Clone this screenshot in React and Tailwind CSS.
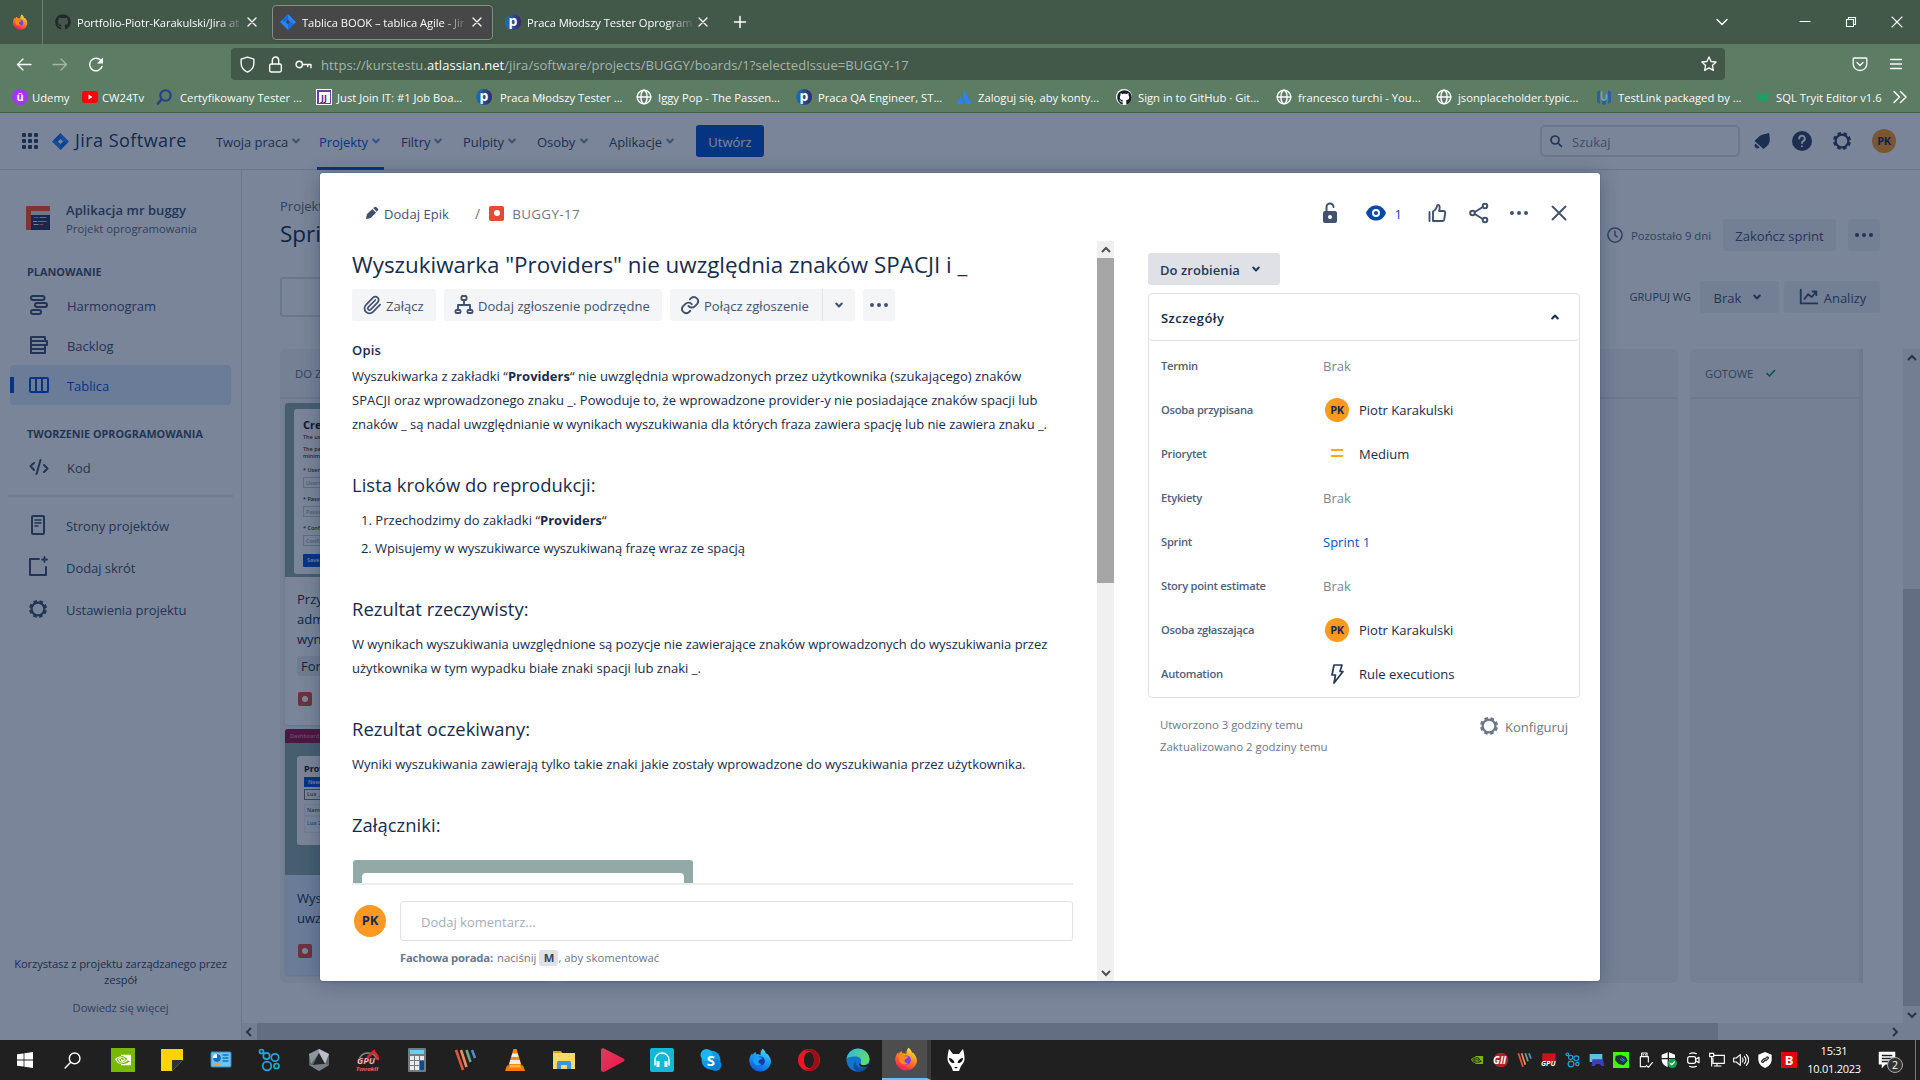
import React from "react";
import { FaGithub } from "react-icons/fa";
import { SiNvidia } from "react-icons/si";
import { Paperclip } from "lucide-react";

/* ---------- icons ---------- */

function Svg({ className = "size-6", children, vb = "0 0 24 24" }) {
  return (
    <svg className={`shrink-0 ${className}`} viewBox={vb} fill="none" stroke="currentColor" strokeWidth="2" strokeLinecap="round" strokeLinejoin="round">
      {children}
    </svg>
  );
}

const Chevron = ({ className = "size-4" }) => (
  <Svg className={className} vb="0 0 16 16"><path d="M5.200 6.500 8 9.500l2.800-3" /></Svg>
);
const ChevronUp = ({ className = "size-4" }) => (
  <Svg className={className} vb="0 0 16 16"><path d="M5.200 9.500 8 6.500l2.800 3" /></Svg>
);
const Dots = ({ className }) => (
  <Svg className={className}><g fill="currentColor" stroke="none"><circle cx="5" cy="12" r="2" /><circle cx="12" cy="12" r="2" /><circle cx="19" cy="12" r="2" /></g></Svg>
);
const Gear = ({ className }) => (
  <Svg className={className}>
    <circle cx="12" cy="12" r="6.4" strokeWidth="2.3" />
    <circle cx="12" cy="12" r="7.7" strokeWidth="2.6" strokeLinecap="butt" strokeDasharray="3.5 2.547" strokeDashoffset="-1.27" />
  </Svg>
);
const Cross = ({ className, w = 1.3 }) => (
  <Svg className={className} vb="0 0 16 16"><path strokeWidth={w} d="m4 4 8 8M12 4l-8 8" /></Svg>
);
const Globe = () => (
  <Svg className="size-4" vb="0 0 16 16"><g strokeWidth="1.4"><circle cx="8" cy="8" r="6.8" /><ellipse cx="8" cy="8" rx="3.1" ry="6.8" /><path d="M1.2 8h13.6" /></g></Svg>
);
const JiraMark = ({ className }) => (
  <Svg className={className} vb="0 0 16 16"><path fill="#2684ff" stroke="none" fillRule="evenodd" d="M8 0 16 8 8 16 0 8ZM8 5.6 5.6 8 8 10.4 10.4 8Z" /><path fill="#0052cc" stroke="none" opacity=".45" d="M8 0v5.6L4 8l-2-2ZM8 16v-5.6L12 8l2 2Z" /></Svg>
);
const Firefox = ({ className, blue }) => {
  const a = blue ? "#4fe3ff" : "#fff04a";
  const b = blue ? "#1b9cf5" : "#ff8a1c";
  const c = blue ? "#0a59d9" : "#f7155f";
  const id = blue ? "fxb" : "fxo";
  return (
    <Svg className={className}>
      <defs><linearGradient id={id} x1=".8" y1="0" x2=".3" y2="1"><stop offset="0" stopColor={a} /><stop offset=".45" stopColor={b} /><stop offset="1" stopColor={c} /></linearGradient></defs>
      <path fill={`url(#${id})`} stroke="none" d="M14.5.8c2 1.300 3 3 3.300 4.700 1.500.3 2.300 1 2.800 2 2 2.500 2.600 5 2.200 7.700A11 11 0 0 1 12 23.500 11 11 0 0 1 1.200 13c0-3 1-5.500 3-7.700l.4 1.800C5.500 5.500 6.500 4.500 7.500 4c0 1 .3 1.700 1 2.300 1.500-.2 3 0 4 .6C12.300 4.500 13 2.500 14.500.8Z" />
      <circle cx="12.300" cy="13" r="4.600" fill={blue ? "#1739a8" : "#7a3ff2"} stroke="none" />
      <path fill={b} stroke="none" d="M5.500 9c2-1.500 4.500-1.500 6 .2 1.600 0 2.500.3 2.800 1-1 1.300-3 1.300-3.800 2.800-.5 1.500.8 3 3 3-2 2.500-7.500 1.500-8.500-3Z" />
    </Svg>
  );
};
const PMark = () => (
  <span className="flex size-4 shrink-0 items-center justify-center rounded-full bg-linear-to-r from-[#1173b8] to-[#2b2a6b] text-[14px] leading-none font-bold text-white"><span className="-mt-0.5">p</span></span>
);
const Bug = ({ className = "size-3.5" }) => (
  <span className={`flex shrink-0 items-center justify-center rounded-xs bg-[#e5493a] ${className}`}><span className="size-1.5 rounded-full bg-white" /></span>
);

/* ---------- browser chrome ---------- */

function Tab({ icon, title, active, className }) {
  return (
    <div className={`flex h-[35px] items-center rounded-[4px] pr-[7px] ${className} ${active ? "border border-[#83917f] bg-[#474747] pl-[7px] shadow" : "pl-2"}`}>
      {icon}
      <span className="ml-1.5 flex-1 overflow-hidden pt-0.5 text-[11.2px] tracking-[-0.060px] whitespace-nowrap text-[#fbfbfe] [mask-image:linear-gradient(to_right,black_84%,transparent)]">{title}</span>
      <Cross className="size-4" />
    </div>
  );
}

function TabStrip() {
  return (
    <div className="flex h-11 items-center bg-[#42594a] text-white">
      <div className="flex h-full w-[43px] items-center justify-center border-r border-[#6b7f70] pr-0.5"><Firefox className="size-4" /></div>
      <Tab className="ml-1 w-[220px]" icon={<FaGithub className="size-4 shrink-0 text-[#24292e]" />} title="Portfolio-Piotr-Karakulski/Jira at" />
      <Tab className="ml-[5px] w-[221px]" active icon={<JiraMark className="size-4" />} title="Tablica BOOK – tablica Agile - Jir" />
      <Tab className="ml-[4px] w-[221px]" icon={<PMark />} title="Praca Młodszy Tester Oprogram" />
      <Svg className="ml-[14px] size-4" vb="0 0 16 16"><path strokeWidth="1.500" d="M8 2.500v11M2.500 8h11" /></Svg>
      <div className="flex-1" />
      <Svg className="mr-[67px] size-4" vb="0 0 16 16"><path strokeWidth="1.4" d="m3 5.500 5 5 5-5" /></Svg>
      <Svg className="mr-[30px] size-4" vb="0 0 16 16"><path strokeWidth="1.2" d="M3 7.500h10" /></Svg>
      <Svg className="mr-[30px] size-4" vb="0 0 16 16"><path strokeWidth="1.1" strokeLinejoin="miter" d="M3.500 5.500h7v7h-7zM5.500 5.500v-2h7v7h-2" /></Svg>
      <Svg className="mr-[15px] size-4" vb="0 0 16 16"><path strokeWidth="1.1" d="m3 3 10 10M13 3 3 13" /></Svg>
    </div>
  );
}

function AddressBar() {
  return (
    <div className="flex h-10 items-center bg-[#5c7c64] text-[#fbfbfe]">
      <Svg className="ml-4 size-4" vb="0 0 16 16"><path strokeWidth="1.4" d="M15 8.500H1.500M7 3 1.500 8.500 7 14" /></Svg>
      <Svg className="ml-5 size-4 opacity-45" vb="0 0 16 16"><path strokeWidth="1.4" d="M1 8.500h13.500M9 3l5.500 5.500L9 14" /></Svg>
      <Svg className="ml-5 size-4" vb="0 0 16 16"><path strokeWidth="1.500" d="M14 10.500a6.300 6.300 0 1 1-1.300-6.200" /><path fill="currentColor" stroke="none" d="M15 1.500v6H9z" /></Svg>
      <div className="ml-[127px] flex h-8 w-[1494px] items-center rounded-[4px] bg-[#42594a]">
        <Svg className="ml-[8px] size-[17px]" vb="0 0 16 16"><path strokeWidth="1.300" d="M8 1 2 3v4c0 4 2.500 6.500 6 8.200C11.500 13.500 14 11 14 7V3Z" /></Svg>
        <Svg className="ml-[11px] size-[17px]" vb="0 0 16 16"><g strokeWidth="1.300"><rect x="2.500" y="7.500" width="11" height="7.500" rx="1.500" /><path d="M5 7.500V4a3 3 0 0 1 6 0v3.500" /></g></Svg>
        <Svg className="ml-[11px] size-[17px]" vb="0 0 16 16"><g strokeWidth="1.300"><circle cx="4" cy="8" r="3" /><path d="M7 8h8v3M12 8v2" /></g></Svg>
        <span className="ml-[9px] pt-[3px] text-[13px] tracking-[0.060px] whitespace-nowrap text-[#a6b5aa]">https://kurstestu.<span className="text-[#fbfbfe]">atlassian.net</span>/jira/software/projects/BUGGY/boards/1?selectedIssue=BUGGY-17</span>
        <div className="flex-1" />
        <Svg className="mr-[8px] size-4" vb="0 0 16 16"><path strokeWidth="1.300" d="m8 .9 2.100 4.600 5 .5-3.700 3.400 1 5L8 11.900l-4.400 2.500 1-5L.9 6l5-.5Z" /></Svg>
      </div>
      <Svg className="ml-[127px] size-4" vb="0 0 16 16"><g strokeWidth="1.300"><path d="M2 2h12a.8.8 0 0 1 .8.8V8A6.800 6.500 0 0 1 1.200 8V2.800A.8.8 0 0 1 2 2ZM5 6.500l3 3 3-3" /></g></Svg>
      <Svg className="ml-5 size-4" vb="0 0 16 16"><path strokeWidth="1.300" d="M2.500 3.500h11M2.500 8h11M2.500 12.500h11" /></Svg>
    </div>
  );
}

function Bookmark({ icon, label, className }) {
  return (
    <div className={`flex shrink-0 items-center ${className}`}>
      {icon}
      <span className="pt-[3px] whitespace-nowrap">{label}</span>
    </div>
  );
}

function Bookmarks() {
  return (
    <div className="flex h-[29px] items-center border-b border-[#42594a] bg-[#5c7c64] pb-[2px] pl-3 text-[11.250px] text-[#fbfbfe]">
      <Bookmark className="w-[70px] gap-1" icon={<span className="flex size-4 items-center justify-center rounded-full bg-[#a435f0] text-[11px] font-bold">û</span>} label="Udemy" />
      <Bookmark className="w-[74px] gap-1" icon={<Svg className="size-4" vb="0 0 16 16"><rect x="0" y="2" width="16" height="12" rx="3" fill="#f00" stroke="none" /><path d="m6.500 5.500 4 2.500-4 2.500Z" fill="#fff" stroke="none" /></Svg>} label="CW24Tv" />
      <Bookmark className="w-40 gap-2" icon={<Svg className="size-4 text-[#283e8e]" vb="0 0 16 16"><circle cx="9.500" cy="6.500" r="5.200" /><path strokeWidth="2.600" d="m5.500 10.500-3.500 4" /></Svg>} label="Certyfikowany Tester ..." />
      <Bookmark className="w-40 gap-[5px]" icon={<span className="flex size-4 items-center justify-center border border-white bg-[#6d3aa8]"><span className="flex size-[11px] items-center justify-center bg-white text-[9px] leading-none font-bold text-[#4c2c86]">JJ</span></span>} label="Just Join IT: #1 Job Boa..." />
      <Bookmark className="w-40 gap-2" icon={<PMark />} label="Praca Młodszy Tester ..." />
      <Bookmark className="w-40 gap-[6px]" icon={<Globe />} label="Iggy Pop - The Passen..." />
      <Bookmark className="w-40 gap-[6px]" icon={<PMark />} label="Praca QA Engineer, ST..." />
      <Bookmark className="w-40 gap-[6px]" icon={<Svg className="size-4" vb="0 0 16 16"><path fill="#2684ff" stroke="none" d="M8 1 15.500 15H10L7 8C6.500 5 7 3 8 1ZM4.500 7.500 8.500 15H.5Z" /></Svg>} label="Zaloguj się, aby konty..." />
      <Bookmark className="w-40 gap-[6px]" icon={<span className="flex size-4 items-center justify-center rounded-full bg-white"><FaGithub className="size-[15px] text-[#1b1f2a]" /></span>} label="Sign in to GitHub · Git..." />
      <Bookmark className="w-40 gap-[6px]" icon={<Globe />} label="francesco turchi - You..." />
      <Bookmark className="w-40 gap-[6px]" icon={<Globe />} label="jsonplaceholder.typic..." />
      <Bookmark className="w-40 gap-[6px]" icon={<Svg className="size-4" vb="0 0 16 16"><path fill="#2b5f9e" stroke="none" d="M4 1v14l-3-2V3ZM12 1l3 2v10l-3 2ZM6 11l2 1 2-1v4l-2 1-2-1Z" /><path stroke="#6aa5cf" strokeWidth="1.600" d="M5.500 3v5.500a2.500 2.500 0 1 0 5 0V6" /></Svg>} label="TestLink packaged by ..." />
      <Bookmark className="w-[136px] gap-1" icon={<Svg className="size-4" vb="0 0 16 16"><path stroke="#04aa6d" strokeWidth="2.200" d="m1.500 5 2.500 7 2.500-7 2.500 7 2.500-7" /><path stroke="#04aa6d" strokeWidth="1.200" d="M13 2.500h1.800L13.500 4.200c2 .3 1.200 2.300-.5 1.800" /></Svg>} label="SQL Tryit Editor v1.6" />
      <Svg className="size-4" vb="0 0 16 16"><path strokeWidth="1.500" d="m2 2.500 5.500 5.500L2 13.500M8.500 2.500 14 8l-5.500 5.500" /></Svg>
    </div>
  );
}

/* ---------- jira page ---------- */

function NavItem({ label, active, className }) {
  return (
    <div className={`relative flex h-full items-center tracking-[-0.060px] ${className} ${active ? "text-[#0052cc]" : "text-[#344563]"}`}>
      <span className="pt-[3px] whitespace-nowrap">{label}</span>
      <Chevron className="ml-auto size-4 opacity-60" />
      {active && <span className="absolute right-0 bottom-[-1px] left-[-2px] h-[3px] bg-[#0052cc]" />}
    </div>
  );
}

function TopNav() {
  return (
    <div className="flex h-[57px] shrink-0 items-center border-b border-[#dfe1e6] bg-white text-[13px] shadow-sm">
      <div className="ml-[22px] grid grid-cols-3 gap-[2px]">
        {Array.from({ length: 9 }, (_, i) => <span key={i} className="size-[4px] rounded-[1px] bg-[#344563]" />)}
      </div>
      <JiraMark className="ml-[14px] size-[17px]" />
      <span className="ml-[6px] w-[141px] pb-0.5 text-[18px] font-medium tracking-[0.450px] whitespace-nowrap text-[#253858]">Jira Software</span>
      <NavItem label="Twoja praca" className="w-[85px]" />
      <NavItem label="Projekty" active className="ml-[18px] w-[65px]" />
      <NavItem label="Filtry" className="ml-[17px] w-[45px]" />
      <NavItem label="Pulpity" className="ml-[17px] w-[57px]" />
      <NavItem label="Osoby" className="ml-[17px] w-[55px]" />
      <NavItem label="Aplikacje" className="ml-[17px] w-[68px]" />
      <div className="ml-[19px] flex h-8 w-17 items-center justify-center rounded-[3px] bg-[#0052cc] pt-[3px] text-white">Utwórz</div>
      <div className="mr-[-1px] ml-auto flex h-8 w-[200px] items-center rounded-[5px] border-2 border-[#dfe1e6] text-[#7a869a]">
        <Svg className="ml-[6px] size-4 text-[#42526e]" vb="0 0 16 16"><circle cx="7" cy="7" r="4" strokeWidth="1.700" /><path strokeWidth="1.700" d="m10 10 3.500 3.500" /></Svg>
        <span className="ml-2 pt-[3px]">Szukaj</span>
      </div>
      <Svg className="ml-[11px] size-6 text-[#344563]"><path fill="currentColor" stroke="none" d="M19 4c.8 3 1 6.500.5 9-.4 2-1.500 3-3 4.500L13.500 20 4.500 12 8 8.500c2-2 3-2.500 5-3C15 5 17 4.500 19 4ZM5.500 14.500l4 4a2.600 2.600 0 0 1-4-4Z" /></Svg>
      <Svg className="ml-4 size-6 text-[#344563]"><circle cx="12" cy="12" r="10" fill="currentColor" stroke="none" /><path stroke="#fff" d="M9.200 9.600a2.800 2.800 0 1 1 4 2.500c-.8.500-1.200 1-1.200 1.900M12 17.200v.1" /></Svg>
      <Gear className="ml-4 size-6 text-[#344563]" />
      <div className="mr-6 ml-[18px] flex size-6 items-center justify-center rounded-full bg-[#ff991f] text-[11px] font-bold tracking-[-0.400px] text-[#172b4d]">PK</div>
    </div>
  );
}

function SideItem({ icon, label, active, className = "h-10" }) {
  return (
    <div className={`relative mx-[10px] flex items-center rounded-[4px] text-[13px] tracking-[-0.040px] ${className} ${active ? "bg-[#deebff] text-[#0052cc]" : "text-[#42526e]"}`}>
      {active && <span className="absolute top-3 bottom-3 left-0 w-1 bg-[#0052cc]" />}
      <span className="ml-[17px] flex w-6 items-center justify-center">{icon}</span>
      <span className="ml-4 pt-1">{label}</span>
    </div>
  );
}

function Sidebar() {
  return (
    <div className="flex w-[242px] shrink-0 flex-col border-r border-[#dfe1e6] bg-white">
      <div className="mt-7 flex pl-[26px]">
        <Svg className="mt-2 size-6"><rect width="24" height="24" rx="1" fill="#ff5630" stroke="none" /><rect x="5" y="5" width="19" height="4" fill="#dfe1e6" stroke="none" /><rect x="5" y="9" width="19" height="15" fill="#253858" stroke="none" /><g strokeWidth="1"><path stroke="#ff7452" d="M8 11.500h4M14 18.500h3" /><path stroke="#79e2f2" d="M14 11.500h6M12 15.500h8" /><path stroke="#fff" d="M7.500 15.500h3M8 18.500h4" /></g></Svg>
        <div className="ml-4 flex flex-col">
          <span className="flex h-6 items-center pt-0.5 text-[13px] font-semibold tracking-[0.050px] text-[#42526e]">Aplikacja mr buggy</span>
          <span className="flex h-3.5 items-center text-[11.300px] text-[#5e6c84]">Projekt oprogramowania</span>
        </div>
      </div>
      <div className="mt-7 flex h-4 items-center pl-[27px] text-[10.900px] font-bold text-[#42526e]">PLANOWANIE</div>
      <div className="mt-[5px]">
        <SideItem label="Harmonogram" icon={<Svg><rect x="4" y="3" width="13.500" height="4" rx="2" /><rect x="8" y="10" width="12" height="4" rx="2" /><rect x="4" y="17" width="10" height="4" rx="2" /></Svg>} />
        <SideItem label="Backlog" icon={<Svg><path d="M4 4h14v4H4zM4 8h16v4H4zM4 12h14v8H4zM4 16h14" /></Svg>} />
        <SideItem active label="Tablica" icon={<Svg><rect x="3" y="5" width="18" height="14" rx="1" /><path d="M9 5v14M15 5v14" /></Svg>} />
      </div>
      <div className="mt-[21px] flex h-4 items-center pl-[27px] text-[10.800px] font-bold whitespace-nowrap text-[#42526e]">TWORZENIE OPROGRAMOWANIA</div>
      <div className="mt-[5px]">
        <SideItem label="Kod" icon={<Svg><path d="m7 8-3.500 3L7 15M17 10l3.500 3.500L17 17M13.500 5l-4 14" /></Svg>} />
      </div>
      <div className="mx-2 mt-2 h-[2px] bg-[#ebecf0]" />
      <div className="mt-[7px] -ml-px">
        <SideItem className="h-[42px]" label="Strony projektów" icon={<Svg><rect x="6" y="3" width="12" height="18" rx="1" /><path strokeWidth="1.600" d="M9 7h6M9 10h6M9 13h3" /></Svg>} />
        <SideItem className="h-[42px]" label="Dodaj skrót" icon={<Svg><path d="M13 4H4v16h16v-8" /><path strokeWidth="1.800" d="M18.500 2v5M16 4.500h5" /></Svg>} />
        <SideItem className="h-[42px]" label="Ustawienia projektu" icon={<Gear />} />
      </div>
      <div className="mt-auto pb-6 text-center text-[11.200px] leading-4 tracking-[-0.080px]">
        <p className="px-3 text-[#344563]">Korzystasz z projektu zarządzanego przez zespół</p>
        <p className="mt-3 text-[#5e6c84]">Dowiedz się więcej</p>
      </div>
    </div>
  );
}

function GreyButton({ children, className }) {
  return <div className={`flex h-8 items-center justify-center rounded-[3px] bg-[#f0f1f4] text-[13px] text-[#42526e] ${className}`}>{children}</div>;
}

function FormThumb() {
  return (
    <div className="h-[174px] bg-[#91aaa7] pt-[6px] pl-[9px] text-[5.500px] font-semibold text-[#333]">
      <div className="h-[165px] rounded-[3px] bg-white pt-[8px] pl-[9px]">
        <p className="text-[11px] leading-4 font-bold text-[#111]">Create</p>
        <p className="mt-[1px] leading-[7px]">The username</p>
        <p className="mt-[5px] leading-[7px]">The password<br />minimum</p>
        {["Username", "Password", "Confirm"].map((t) => (
          <div key={t} className="mt-[5px] h-[24px]">
            <p className="pt-[1px] leading-[9px]">* {t}</p>
            <p className="mt-[2px] h-[11px] border border-[#ccc] pl-0.5 leading-[10px] text-[#aaa]">{t}</p>
          </div>
        ))}
        <p className="mt-[7px] h-[13px] rounded-[1px] bg-[#0052cc] pl-1 leading-[12px] text-white">Save</p>
      </div>
    </div>
  );
}

function ProviderThumb() {
  return (
    <div className="h-[146px] bg-[#91aaa7] text-[5.500px] font-semibold text-[#555]">
      <div className="flex h-[14px] items-center gap-1 overflow-hidden bg-[#9c1040] pl-[5px] text-[#d08aa0]"><span>Dashboard</span><span>Clients</span></div>
      <div className="mt-[13px] ml-3 h-[89px] rounded-[3px] bg-white pt-[6px] pl-[7px]">
        <p className="text-[9px] leading-[13px] font-bold text-[#111]">Providers</p>
        <p className="mt-[2px] h-[10px] bg-[#0052cc] pl-1 leading-[10px] text-white">New</p>
        <p className="mt-[2px] h-[11px] border border-[#777] pl-0.5 leading-[9px]">Lux _</p>
        <p className="mt-1 h-[12px] border border-[#eee] pl-0.5 leading-[11px]">Name</p>
        <p className="h-[17px] border border-[#eee] pl-0.5 leading-[13px] text-[#2a7de1]">Lux 2</p>
      </div>
    </div>
  );
}

function ScrollArrow({ className, d }) {
  return <div className={`flex shrink-0 items-center justify-center ${className}`}><Svg className="size-3" vb="0 0 12 12"><path d={d} strokeLinecap="butt" strokeLinejoin="miter" /></Svg></div>;
}

function Board() {
  return (
    <div className="flex min-w-0 flex-1 flex-col bg-white">
      <div className="flex min-h-0 flex-1">
        <div className="flex min-w-0 flex-1 flex-col pl-[38px]">
          <div className="flex h-[100px] items-start justify-between pr-[23px]">
            <div className="pt-[26px]">
              <p className="text-[13px] leading-5 text-[#5e6c84]">Projekty</p>
              <p className="text-[22.500px] leading-9 text-[#172b4d]">Sprint 1</p>
            </div>
            <div className="flex items-center pt-[49px]">
              <Svg className="size-[18px] text-[#5e6c84]"><circle cx="12" cy="12" r="9.500" /><path d="M12 7v5.500l3 2" /></Svg>
              <span className="mr-[12px] ml-[7px] pt-0.5 text-[11.300px] text-[#5e6c84]">Pozostało 9 dni</span>
              <GreyButton className="w-[113px]"><span className="pt-1">Zakończ sprint</span></GreyButton>
              <GreyButton className="ml-3 w-8"><Dots className="size-6" /></GreyButton>
            </div>
          </div>
          <div className="flex h-[79px] items-start justify-between pr-[23px]">
            <div className="mt-[7px] h-10 w-40 rounded-[3px] border-2 border-[#dfe1e6]" />
            <div className="flex items-center pt-[11px]">
              <span className="mr-[9px] text-[11px] text-[#42526e]">GRUPUJ WG</span>
              <GreyButton className="w-[79px]"><span className="mr-2 pt-[3px]">Brak</span><Chevron /></GreyButton>
              <GreyButton className="ml-[5px] w-[96px]"><Svg className="mr-1 size-[22px]"><path d="M3 4v15h18" /><path d="m7 14 4-5 4 3 5-6M16 6h4v4" /></Svg><span className="pt-[3px]">Analizy</span></GreyButton>
            </div>
          </div>
          <div className="flex gap-3">
            <div className="h-[634px] w-[270px] rounded-[6px] bg-[#f4f5f7]">
              <div className="flex h-[50px] items-center border-b-2 border-[#e3e5ea] pl-[15px] pt-0.5 text-[11.300px] text-[#5e6c84]">DO ZROBIENIA</div>
              <div className="mx-[5px] mt-1 h-[322px] overflow-hidden rounded-[3px] bg-white shadow">
                <FormThumb />
                <div className="pt-3 pl-3 text-[13px] leading-5 text-[#172b4d]">
                  <p>Przycisk<br />administrator<br />wyników</p>
                  <p className="mt-[7px] h-5 w-24 rounded-[3px] bg-[#ebecf0] pl-1">Formularz</p>
                  <Bug className="mt-4 ml-px size-3.5" />
                </div>
              </div>
              <div className="mx-[5px] mt-1 h-[246px] overflow-hidden rounded-[3px] bg-[#deebff] shadow">
                <ProviderThumb />
                <div className="pt-[13px] pl-3 text-[13px] leading-5 text-[#172b4d]">
                  <p>Wyszukiwarka<br />uwzględnia</p>
                  <Bug className="mt-4 ml-px size-3.5" />
                </div>
              </div>
            </div>
            <div className="h-[634px] flex-1 rounded-[6px] bg-[#f4f5f7]"><div className="h-[50px] border-b-2 border-[#e3e5ea]" /></div>
            <div className="mr-10 h-[634px] w-[173px] rounded-l-[6px] bg-[#f4f5f7] bg-linear-to-l from-[#dfe2e8] via-[#f4f5f7] via-4% to-[#f4f5f7]">
              <div className="flex h-[50px] items-center border-b-2 border-[#e3e5ea] pl-[15px] text-[11.300px] text-[#5e6c84]"><span className="pt-0.5 tracking-[-0.080px]">GOTOWE</span><Svg className="ml-[10px] size-4 text-[#00875a]" vb="0 0 16 16"><path strokeWidth="1.500" d="m4 8.500 2.500 2.500 5-5.500" /></Svg></div>
            </div>
          </div>
        </div>
        <div className="mt-[179px] flex w-[17px] shrink-0 flex-col bg-[#f0f0f2] text-[#505050]">
          <ScrollArrow className="h-[17px]" d="M2 8l4-4 4 4" />
          <div className="mt-[223px] flex-1 bg-[#cdcdcd]" />
          <ScrollArrow className="h-[17px]" d="M2 4l4 4 4-4" />
        </div>
      </div>
      <div className="flex h-[17px] shrink-0 bg-[#f0f0f2] pr-[17px] text-[#505050]">
        <ScrollArrow className="w-[13px]" d="M8 2 4 6l4 4" />
        <div className="ml-[2px] w-[1461px] bg-[#cdcdcd]" />
        <div className="flex-1" />
        <ScrollArrow className="w-[17px]" d="m4 2 4 4-4 4" />
      </div>
    </div>
  );
}

/* ---------- issue dialog ---------- */

function Avatar({ className }) {
  return <span className={`flex shrink-0 items-center justify-center rounded-full bg-[#ff991f] font-bold text-[#172b4d] ${className}`}>PK</span>;
}

function DialogHeader() {
  return (
    <div className="flex h-[68px] items-center pt-3 text-[13px] text-[#42526e]">
      <Svg className="ml-[44px] size-4" vb="0 0 16 16"><path fill="currentColor" stroke="none" d="M10 2.500c1-1 1.600-1 2.500-.2l1.200 1.200c.8.900.8 1.500 0 2.300l-.9.900-3.700-3.700ZM8.300 3.900l3.800 3.800-5.400 5.400-3.900.8c-.5.100-.8-.2-.7-.7l.8-3.900Z" /></Svg>
      <span className="ml-[4px] pt-[3px] tracking-[0.060px]">Dodaj Epik</span>
      <span className="ml-[26px] text-[14px] text-[#6b778c]">/</span>
      <Bug className="ml-[9px] size-[15px]" />
      <span className="ml-2 pt-[3px] text-[13.400px] tracking-[0.350px] text-[#6b778c]">BUGGY-17</span>
      <div className="flex-1" />
      <Svg className="size-6"><rect x="5" y="10" width="14" height="12" rx="2" fill="currentColor" stroke="none" /><path d="M8.500 11V6a3.500 3.500 0 0 1 7 0" /><circle cx="12" cy="16" r="2" fill="#fff" stroke="none" /></Svg>
      <Svg className="ml-[22px] size-6 text-[#0747a6]"><path fill="currentColor" stroke="none" d="M12 4.500c4.500 0 8 2.500 10 7.500-2 5-5.500 7.500-10 7.500S4 17 2 12C4 7 7.500 4.500 12 4.500Z" /><circle cx="12" cy="12" r="3" stroke="#fff" strokeWidth="2" /></Svg>
      <span className="ml-[7px] pt-[3px] text-[#0747a6]">1</span>
      <Svg className="ml-[23px] size-6"><path strokeWidth="1.900" d="M8 10.500V20h9.500c1 0 1.500-.5 1.700-1.500l1-6.500c.2-1.200-.5-2-1.700-2H14c1-2.500 1-6-.8-6-1 0-1.200.6-1.400 1.700C11.300 8 9.800 9.500 8 10.500ZM4.500 11v9" /></Svg>
      <Svg className="ml-[18px] size-6"><circle cx="18" cy="5" r="2.300" /><circle cx="18" cy="19" r="2.300" /><circle cx="5.500" cy="12" r="2.300" /><path d="m7.800 11 8-5M7.800 13l8 5" /></Svg>
      <Dots className="ml-4 size-6" />
      <Svg className="mr-[29px] ml-4 size-6"><path strokeWidth="1.900" d="m5.500 5.500 13 13M18.500 5.500l-13 13" /></Svg>
    </div>
  );
}

function ToolButton({ children, className }) {
  return <div className={`flex h-8 items-center bg-[#f4f5f7] whitespace-nowrap ${className}`}>{children}</div>;
}

function Heading({ children }) {
  return <h2 className="mt-[35px] h-7 text-[18.400px] leading-7 tracking-[0.040px] text-[#172b4d]">{children}</h2>;
}

function IssueBody() {
  return (
    <div className="flex w-[777px] shrink-0 flex-col pr-6 pl-8 text-[13px] text-[#172b4d]">
      <h1 className="h-12 text-[22.400px] leading-[48px] whitespace-nowrap">Wyszukiwarka "Providers" nie uwzględnia znaków SPACJI i _</h1>
      <div className="flex text-[#42526e]">
        <ToolButton className="w-[84px] rounded-[3px] pl-[10px]">
          <Paperclip className="mr-[4px] size-5" strokeWidth={2.100} />
          <span className="pt-[3px]">Załącz</span>
        </ToolButton>
        <ToolButton className="ml-2 w-[218px] rounded-[3px] pl-[8px]">
          <Svg className="mr-[2px] size-6"><g strokeWidth="1.900"><rect x="9.500" y="3" width="5" height="4" rx="1" /><rect x="3.500" y="17" width="5" height="3" rx="1" /><rect x="15.500" y="17" width="5" height="3" rx="1" /><path d="M12 7v5M6 17v-5h12v5" /></g></Svg>
          <span className="pt-[3px] tracking-[0.050px]">Dodaj zgłoszenie podrzędne</span>
        </ToolButton>
        <ToolButton className="ml-2 w-[152px] rounded-l-[3px] pl-[8px]">
          <Svg className="mr-[2px] size-6"><g transform="translate(2 2) scale(.84)"><path strokeWidth="2.300" d="M10 13a5 5 0 0 0 7.500.5l3-3a5 5 0 0 0-7-7l-1.700 1.700M14 11a5 5 0 0 0-7.500-.5l-3 3a5 5 0 0 0 7 7l1.700-1.700" /></g></Svg>
          <span className="pt-[3px] tracking-[0.040px]">Połącz zgłoszenie</span>
        </ToolButton>
        <ToolButton className="w-[33px] justify-center rounded-r-[3px] border-l border-[#dfe1e6]"><Chevron /></ToolButton>
        <ToolButton className="ml-2 w-8 justify-center rounded-[3px]"><Dots className="size-6" /></ToolButton>
      </div>
      <p className="mt-5 h-[18px] leading-[18px] font-semibold tracking-[0.200px]">Opis</p>
      <div className="mt-[5px] leading-6 whitespace-nowrap">
        <p className="tracking-[0.035px]">Wyszukiwarka z zakładki “<b>Providers</b>“ nie uwzględnia wprowadzonych przez użytkownika (szukającego) znaków</p>
        <p className="tracking-[0.010px]">SPACJI oraz wprowadzonego znaku _. Powoduje to, że wprowadzone provider-y nie posiadające znaków spacji lub</p>
        <p className="tracking-[-0.045px]">znaków _ są nadal uwzględnianie w wynikach wyszukiwania dla których fraza zawiera spację lub nie zawiera znaku _.</p>
      </div>
      <Heading>Lista kroków do reprodukcji:</Heading>
      <ol className="mt-[9px] flex flex-col gap-1 pl-[9px] leading-6">
        <li className="tracking-[0.040px]">1. Przechodzimy do zakładki “<b>Providers</b>“</li>
        <li className="tracking-[-0.060px]">2. Wpisujemy w wyszukiwarce wyszukiwaną frazę wraz ze spacją</li>
      </ol>
      <Heading>Rezultat rzeczywisty:</Heading>
      <div className="mt-[9px] leading-6 whitespace-nowrap">
        <p className="tracking-[-0.040px]">W wynikach wyszukiwania uwzględnione są pozycje nie zawierające znaków wprowadzonych do wyszukiwania przez</p>
        <p className="tracking-[0.020px]">użytkownika w tym wypadku białe znaki spacji lub znaki _.</p>
      </div>
      <Heading>Rezultat oczekiwany:</Heading>
      <p className="mt-[9px] leading-6 tracking-[-0.015px] whitespace-nowrap">Wyniki wyszukiwania zawierają tylko takie znaki jakie zostały wprowadzone do wyszukiwania przez użytkownika.</p>
      <Heading>Załączniki:</Heading>
      <div className="mt-[21px] ml-px h-[23px] w-[340px] rounded-t-[3px] bg-[#91aaa7] px-[9px] pt-[13px]"><div className="h-full rounded-t-[4px] bg-white" /></div>
      <div className="h-[2px] bg-[#ebecf0]" />
      <div className="mt-4 flex items-center pl-[2px]">
        <Avatar className="size-8 text-[13px] tracking-[-0.200px]" />
        <div className="ml-[14px] flex h-10 flex-1 items-center rounded-[3px] border border-[#dfe1e6] pt-[3px] pl-5 text-[#a5adba]">Dodaj komentarz...</div>
      </div>
      <p className="mt-2 flex h-[18px] items-center pl-12 text-[11.300px] text-[#6b778c]">
        <b className="tracking-[-0.200px]">Fachowa porada:</b><span className="ml-[4px]">naciśnij</span>
        <b className="ml-[3px] flex h-4 w-[19px] items-center justify-center rounded-[3px] bg-[#dfe1e6] text-[#344563]">M</b><span>, aby skomentować</span>
      </p>
    </div>
  );
}

function Field({ label, icon, children, muted, link }) {
  return (
    <div className="flex h-11 items-center pl-3">
      <span className="w-[162px] text-[11.200px] font-semibold tracking-[-0.260px] text-[#505f79]">{label}</span>
      {icon && <span className="mr-[10px] ml-[2px] flex w-6 justify-center">{icon}</span>}
      <span className={`pt-0.5 ${muted ? "text-[#7a869a]" : link ? "text-[#0052cc]" : "text-[#172b4d]"}`}>{children}</span>
    </div>
  );
}

function IssueDetails() {
  return (
    <div className="flex-1 pt-3 pr-5 pl-[34px] text-[13px]">
      <div className="flex h-8 w-[132px] items-center rounded-[3px] bg-[#dfe1e6] pl-3 font-semibold text-[#253858]"><span className="pt-[3px] tracking-[0.060px]">Do zrobienia</span><Chevron className="ml-2 size-4" /></div>
      <div className="mt-2 rounded-[4px] border border-[#dfe1e6]">
        <div className="flex h-[47px] items-center justify-between rounded-b-[4px] border-b border-[#dfe1e6] pr-4 pl-3 font-semibold text-[#172b4d]"><span className="pt-[3px] tracking-[0.450px]">Szczegóły</span><ChevronUp /></div>
        <div className="pt-[3px] pb-px">
          <Field label="Termin" muted>Brak</Field>
          <Field label="Osoba przypisana" icon={<Avatar className="size-6 text-[11px] tracking-[-0.400px]" />}>Piotr Karakulski</Field>
          <Field label="Priorytet" icon={<span className="-mt-0.5 flex flex-col gap-[4px]"><i className="h-[2px] w-3 bg-[#ffab00]" /><i className="h-[2px] w-3 bg-[#ffab00]" /></span>}>Medium</Field>
          <Field label="Etykiety" muted>Brak</Field>
          <Field label="Sprint" link>Sprint 1</Field>
          <Field label="Story point estimate" muted>Brak</Field>
          <Field label="Osoba zgłaszająca" icon={<Avatar className="size-6 text-[11px] tracking-[-0.400px]" />}>Piotr Karakulski</Field>
          <Field label="Automation" icon={<Svg className="size-6 text-[#253858]"><path strokeWidth="1.700" d="M9 3h8l-2 6.500h3L9 21l1.500-8H7Z" /></Svg>}>Rule executions</Field>
        </div>
      </div>
      <div className="mt-[16px] flex items-start justify-between pr-3 pl-3 text-[#6b778c]">
        <p className="text-[11.400px] leading-[22px]">Utworzono 3 godziny temu<br />Zaktualizowano 2 godziny temu</p>
        <div className="flex items-center"><Gear className="mr-1 size-6" /><span className="pt-[3px]">Konfiguruj</span></div>
      </div>
    </div>
  );
}

function IssueDialog() {
  return (
    <div className="flex h-[808px] w-[1280px] flex-col overflow-hidden rounded-[3px] bg-white shadow-[0_0_0_1px_rgba(9,30,66,0.08),0_2px_20px_rgba(9,30,66,0.3)]">
      <DialogHeader />
      <div className="flex flex-1">
        <IssueBody />
        <div className="flex w-[17px] shrink-0 flex-col bg-[#f0f0f0] text-[#505050]">
          <ScrollArrow className="h-[17px]" d="M2 8l4-4 4 4" />
          <div className="h-[325px] bg-[#a6a6a6]" />
          <div className="flex-1" />
          <ScrollArrow className="h-[17px]" d="M2 4l4 4 4-4" />
        </div>
        <IssueDetails />
      </div>
    </div>
  );
}

/* ---------- taskbar ---------- */

const Stripes = ({ className }) => (
  <Svg className={className}><g strokeWidth="2.600" strokeLinecap="butt"><path stroke="#e2573b" d="M2 2l7 20" /><path stroke="#ef8a5b" d="M7 2l5.500 17" /><path stroke="#6aa58e" d="M12.500 2l4 12" /><path stroke="#4d8fd0" d="M18 2l3 8" /></g></Svg>
);
const Molecules = ({ className }) => (
  <Svg className={className}><g stroke="#25a5dc" strokeWidth="1.700"><circle cx="3.500" cy="3.500" r="2" /><circle cx="8.500" cy="8" r="3.200" /><circle cx="17" cy="9.500" r="3.700" /><circle cx="9" cy="18" r="4.300" /><circle cx="18.500" cy="18" r="2.500" /></g></Svg>
);
const GpuTweak = ({ className }) => (
  <Svg className={className}><path stroke="#8a8a8a" strokeWidth="1.300" d="M3 12a9.500 9.500 0 0 1 18-1" /><path stroke="#e0242c" strokeWidth="2.500" d="M12 9l6-6M19 5a9 9 0 0 1 3 6" /><text x="1" y="16" fontSize="9" fontWeight="700" fontStyle="italic" fill="#fff" stroke="#a00" strokeWidth=".4">GPU</text><text x="0" y="22.500" fontSize="6" fontWeight="700" fontStyle="italic" fill="#e8b9b9" stroke="#900" strokeWidth=".3">TweakII</text></Svg>
);

const apps = [
  <Svg className="size-4" vb="0 0 16 16"><path fill="#fff" stroke="none" d="M0 2.300 6.600 1.400V7.600H0ZM7.400 1.300 16 0v7.600H7.400ZM0 8.400h6.600v6.200L0 13.700ZM7.400 8.400H16V16l-8.600-1.200Z" /></Svg>,
  <Svg className="mr-0.5 size-[17px] text-white"><circle cx="15" cy="9" r="7.500" /><path d="M9.500 14.500 1.500 22.500" /></Svg>,
  <span className="flex size-6 items-center justify-center bg-[#76b900]"><SiNvidia className="size-4 text-white" /></span>,
  <Svg className="size-6"><path fill="#fcd500" stroke="none" d="M1 1h22v11L12 23H1Z" /><path fill="#2d3138" stroke="none" d="M12 12h11L12 23Z" /></Svg>,
  <Svg className="size-6"><rect x="2" y="4" width="20" height="15" rx="1" fill="#6cc4f2" stroke="#3187c4" strokeWidth="1" /><circle cx="8" cy="10" r="4" fill="#fff" stroke="none" /><path fill="#1b6fc2" stroke="none" d="M8 6a4 4 0 1 1-4 4h4Z" /><path stroke="#1b6fc2" strokeWidth="1.300" d="M14 7h5M14 10h5M14 13h5" /><path stroke="#f0a030" strokeWidth="1.300" d="M5 16.500h6" /></Svg>,
  <Molecules className="size-6" />,
  <Svg className="size-6"><path fill="#5d646c" stroke="none" d="m12 1 10 5v11l-10 6-10-6V6Z" /><path fill="#b9bfc5" stroke="none" d="m12 1 10 5-4 10-6-11Z" /><path fill="#8f969d" stroke="none" d="M12 1 2 6l2 10 8-11Z" /><path fill="#24282c" stroke="none" d="m12 5 6 11-12 1Z" /><path fill="#777e85" stroke="none" d="m2 17 4 0 12-1 4 1-10 6Z" /></Svg>,
  <GpuTweak className="size-6" />,
  <Svg className="size-6"><rect x="3" y="0" width="18" height="24" rx="1" fill="#737a80" stroke="none" /><rect x="5" y="2" width="14" height="4" fill="#5fd3f3" stroke="none" /><g fill="#e8eaec" stroke="none"><path d="M5 8h4v4H5zM10 8h4v4h-4zM15 8h4v4h-4zM5 13h4v4H5zM10 13h4v4h-4zM5 18h4v4H5zM10 18h4v4h-4z" /></g><path fill="#0f4a8a" stroke="none" d="M15 13h4v9h-4z" /></Svg>,
  <Stripes className="size-6" />,
  <Svg className="size-6"><path fill="#ff8a00" stroke="none" d="M10.500 1h3L19 19H5Z" /><path fill="#e9edf0" stroke="none" d="m9.300 5.500-1 3.500h7.400l-1-3.500ZM7.300 12l-1 4h11.400l-1-4Z" /><path fill="#f57c00" stroke="none" d="M4 17.500h16l2 5.500H2Z" /><path fill="#ffb24d" stroke="none" d="M7 17h10l1 2.500H6Z" /></Svg>,
  <Svg className="size-6"><path fill="#e2a100" stroke="none" d="M1 3h8l2 3H1Z" /><path fill="#ffd869" stroke="none" d="M1 5h22v16H1Z" /><path fill="#3c94dc" stroke="none" d="M5 21v-6.500A1.500 1.500 0 0 1 6.500 13h11a1.500 1.500 0 0 1 1.500 1.500V21h-4v-4H9v4Z" /></Svg>,
  <Svg className="size-6"><defs><linearGradient id="play" x1="0" y1="0" x2="1" y2="1"><stop stopColor="#d8405c" /><stop offset="1" stopColor="#f5124c" /></linearGradient></defs><path fill="url(#play)" stroke="none" d="M0 2C0 0 2 0 3 .5l19.500 10c1.500 1 1.500 2 0 3L4 23.500c-2 1-4 .5-4-1.500Z" /></Svg>,
  <Svg className="size-6"><rect width="24" height="24" rx="2" fill="#13b8d6" stroke="none" /><path stroke="#fff" strokeWidth="1.500" d="M5 17v-5a7 7 0 0 1 14 0v5" /><path stroke="#fff" strokeWidth="3" strokeLinecap="butt" d="M8 13v6M16 13v6" /></Svg>,
  <Svg className="size-6"><circle cx="12" cy="12" r="9.500" fill="#0f9be6" stroke="none" /><circle cx="7.500" cy="7" r="6" fill="#1fb4f2" stroke="none" /><circle cx="16.500" cy="17" r="6" fill="#0a7fd6" stroke="none" /><text x="12" y="17.500" textAnchor="middle" fontSize="15" fontWeight="700" fill="#fff" stroke="none">S</text></Svg>,
  <Firefox blue className="size-6" />,
  <Svg className="size-6"><path fill="#f01525" stroke="none" fillRule="evenodd" d="M12 1a11 11 0 1 0 0 22 11 11 0 0 0 0-22Zm0 3c2.800 0 5 3.500 5 8s-2.200 8-5 8-5-3.500-5-8 2.200-8 5-8Z" /><path fill="#9e0c17" stroke="none" d="M13 1.100a11 11 0 0 1 0 21.800c-2 0-4-.9-5.500-2.400 5 2.500 9.500-2 9.500-8.500S12.500 1 7.500 3.500C9 2 11 1 13 1.100Z" /></Svg>,
  <Svg className="size-6"><defs><linearGradient id="edge" x1="0" y1="0" x2="1" y2=".4"><stop stopColor="#2cb4e8" /><stop offset="1" stopColor="#5fdc6f" /></linearGradient></defs><circle cx="12" cy="12" r="11.500" fill="#1274cd" stroke="none" /><path fill="#0d4f9e" stroke="none" d="M9.500 13c-.5 5 4 8.500 12 6-2 2.800-5.500 4.500-9.500 4.500-4.500-1-6.500-6-2.500-10.500Z" /><path fill="url(#edge)" stroke="none" d="M.6 11A11.500 11.500 0 0 1 23.500 11c0 4-3 6-6 6-2 0-3.500-.6-3-1.600C16 13 15 8.500 10.500 8.500 6 8.500 2 9 .6 11Z" /><path fill="#202021" stroke="none" d="M14.500 15.400c-.3 1.500 4.500 3.100 9 .2l-1.500 3c-5 1.500-8.500 0-9-2.100-.2-1 .8-1.700 1.500-1.100Z" /></Svg>,
  <Firefox className="size-6" />,
  <Svg className="size-6"><path fill="#fff" stroke="none" d="M5 1c1.500 1.500 3 4 4 5h6c1-1 2.500-3.500 4-5 1 3 1.500 7 1.500 9.500 0 4-2.500 6-4 8.500L15 23H9l-1.500-4C6 16.500 3.500 14.500 3.500 10.500 3.500 8 4 4 5 1Z" /><path fill="#111" stroke="none" d="M5 10c2.500 0 5 2 5.500 5C8 15.500 5 13.500 5 10ZM19 10c-2.500 0-5 2-5.500 5 2.500.5 5.500-1.500 5.500-5ZM10 19h4l-2 1.500Z" /></Svg>,
];

const tray = [
  <SiNvidia className="size-3 text-[#76b900]" />,
  <Svg className="size-4"><circle cx="12" cy="12" r="11" fill="#b3222a" stroke="none" /><text x="0" y="18" fontSize="15" fontWeight="700" fontStyle="italic" fill="#fff" stroke="none">GII</text></Svg>,
  <Stripes className="size-4" />,
  <Svg className="size-4"><rect x="2" y="2" width="20" height="13" fill="#c4161c" stroke="none" /><text x="0" y="21" fontSize="11" fontWeight="700" fontStyle="italic" fill="#fff" stroke="none">GPU</text></Svg>,
  <Molecules className="size-4" />,
  <Svg className="size-4"><rect x="1" y="3" width="19" height="12" fill="#5ec3d8" stroke="none" /><path fill="#3d3dbf" stroke="none" d="M5 11h16l2 10h-4l-3-3h-5l-3 3H4Z" /></Svg>,
  <Svg className="size-4"><rect width="24" height="24" fill="#3dff00" stroke="none" /><path fill="#26323a" stroke="none" d="m4 6 7-2 8 3 3 6-6 7-8-2-5-6Z" /><path stroke="#2c9be0" strokeWidth="1.300" d="M11 11l5 3M13 9l5 4" /></Svg>,
  <Svg className="size-4"><path strokeWidth="1.700" d="M7 7V1.500h8V7M5 7h12v8M5 7v15h8M14 20l3 3 6-7M9.500 4v.5M12.500 4v.5" /></Svg>,
  <Svg className="size-4"><path fill="#fff" stroke="none" d="M11 0 1 4v7c0 6 4 10 10 12 6-2 10-6 10-12V4Z" /><path stroke="#202021" d="M11 0v23M1 10h20" /><circle cx="17" cy="17" r="7" fill="#12a150" stroke="none" /><path stroke="#fff" d="m14 17 2 2 4-4" /></Svg>,
  <Svg className="size-4"><g strokeWidth="1.800"><rect x="4" y="7" width="12" height="10" rx="3" /><path d="m16 11 5-3v8l-5-3M7 2.500c3-1.500 7-1.500 10 0M7 21.500c3 1.500 7 1.500 10 0" /></g></Svg>,
  <Svg className="size-4"><g strokeWidth="1.700" strokeLinejoin="miter"><path d="M8 5h15v12H6v-7M1 2h6v5H1zM4 7v14M12 17v4M8 21h10" /></g></Svg>,
  <Svg className="size-4"><path strokeWidth="1.700" d="M1 9h4l6-5v16l-6-5H1ZM14 9c1.500 2 1.500 4 0 6M17 6.500c3 3.500 3 7.500 0 11M20 4c4.500 5 4.500 11 0 16" /></Svg>,
  <Svg className="size-4"><path fill="#fff" stroke="none" d="M12 0 2 4v7c0 6 4 11 10 13 6-2 10-7 10-13V4Z" /><path stroke="#202021" strokeWidth="1.800" d="m11 13.500-1.500 1.500c-1.500 1.500-3.500-.5-2-2l2.500-2.500c1-1 2-.7 2.500 0M13 9.500 14.500 8c1.500-1.500 3.500.5 2 2L14 12.500c-1 1-2 .7-2.500 0" /></Svg>,
  <span className="flex size-4 items-center justify-center bg-[#e3000f] text-[13px] leading-none font-bold">B</span>,
];

function Taskbar() {
  return (
    <div className="flex h-10 items-center bg-[#202021] text-white">
      {apps.map((icon, i) => (
        <div key={i} className={`flex h-full w-[49px] shrink-0 items-center justify-center ${i === 18 ? "border-r-4 border-b-2 border-r-[#3a3a3b] border-b-[#76b9ed] bg-[#4d4d4e] pl-[3px]" : ""}`}>{icon}</div>
      ))}
      <div className="ml-auto flex items-center">
        {tray.map((icon, i) => <div key={i} className="flex w-6 justify-center">{icon}</div>)}
      </div>
      <div className="ml-[4px] w-[58px] text-center text-[11px] leading-[18px] tracking-[-0.250px]"><p>15:31</p><p>10.01.2023</p></div>
      <div className="relative ml-[15px] w-[37px]">
        <Svg className="size-[18px]"><path fill="#fff" stroke="none" d="M1 1h22v17H10l-5 5v-5H1Z" /><path stroke="#202021" d="M5 6h14M5 10h14M5 14h14" strokeLinecap="butt" /></Svg>
        <span className="absolute top-[6px] left-[9px] flex size-4 items-center justify-center rounded-full border border-[#aaa] bg-[#333] text-[10.500px] leading-none">2</span>
      </div>
      <div className="h-full w-[5px] border-l border-[#777]" />
    </div>
  );
}

export default function App() {
  return (
    <div className="flex h-[1080px] w-[1920px] flex-col overflow-hidden font-['Open_Sans','Noto_Sans',sans-serif]">
      <TabStrip />
      <AddressBar />
      <Bookmarks />
      <div className="relative flex h-[927px] flex-col overflow-hidden bg-white">
        <TopNav />
        <div className="flex min-h-0 flex-1">
          <Sidebar />
          <Board />
        </div>
        <div className="absolute inset-0 flex items-start justify-center bg-[rgba(9,30,66,0.54)] pt-[60px]">
          <IssueDialog />
        </div>
      </div>
      <Taskbar />
    </div>
  );
}
